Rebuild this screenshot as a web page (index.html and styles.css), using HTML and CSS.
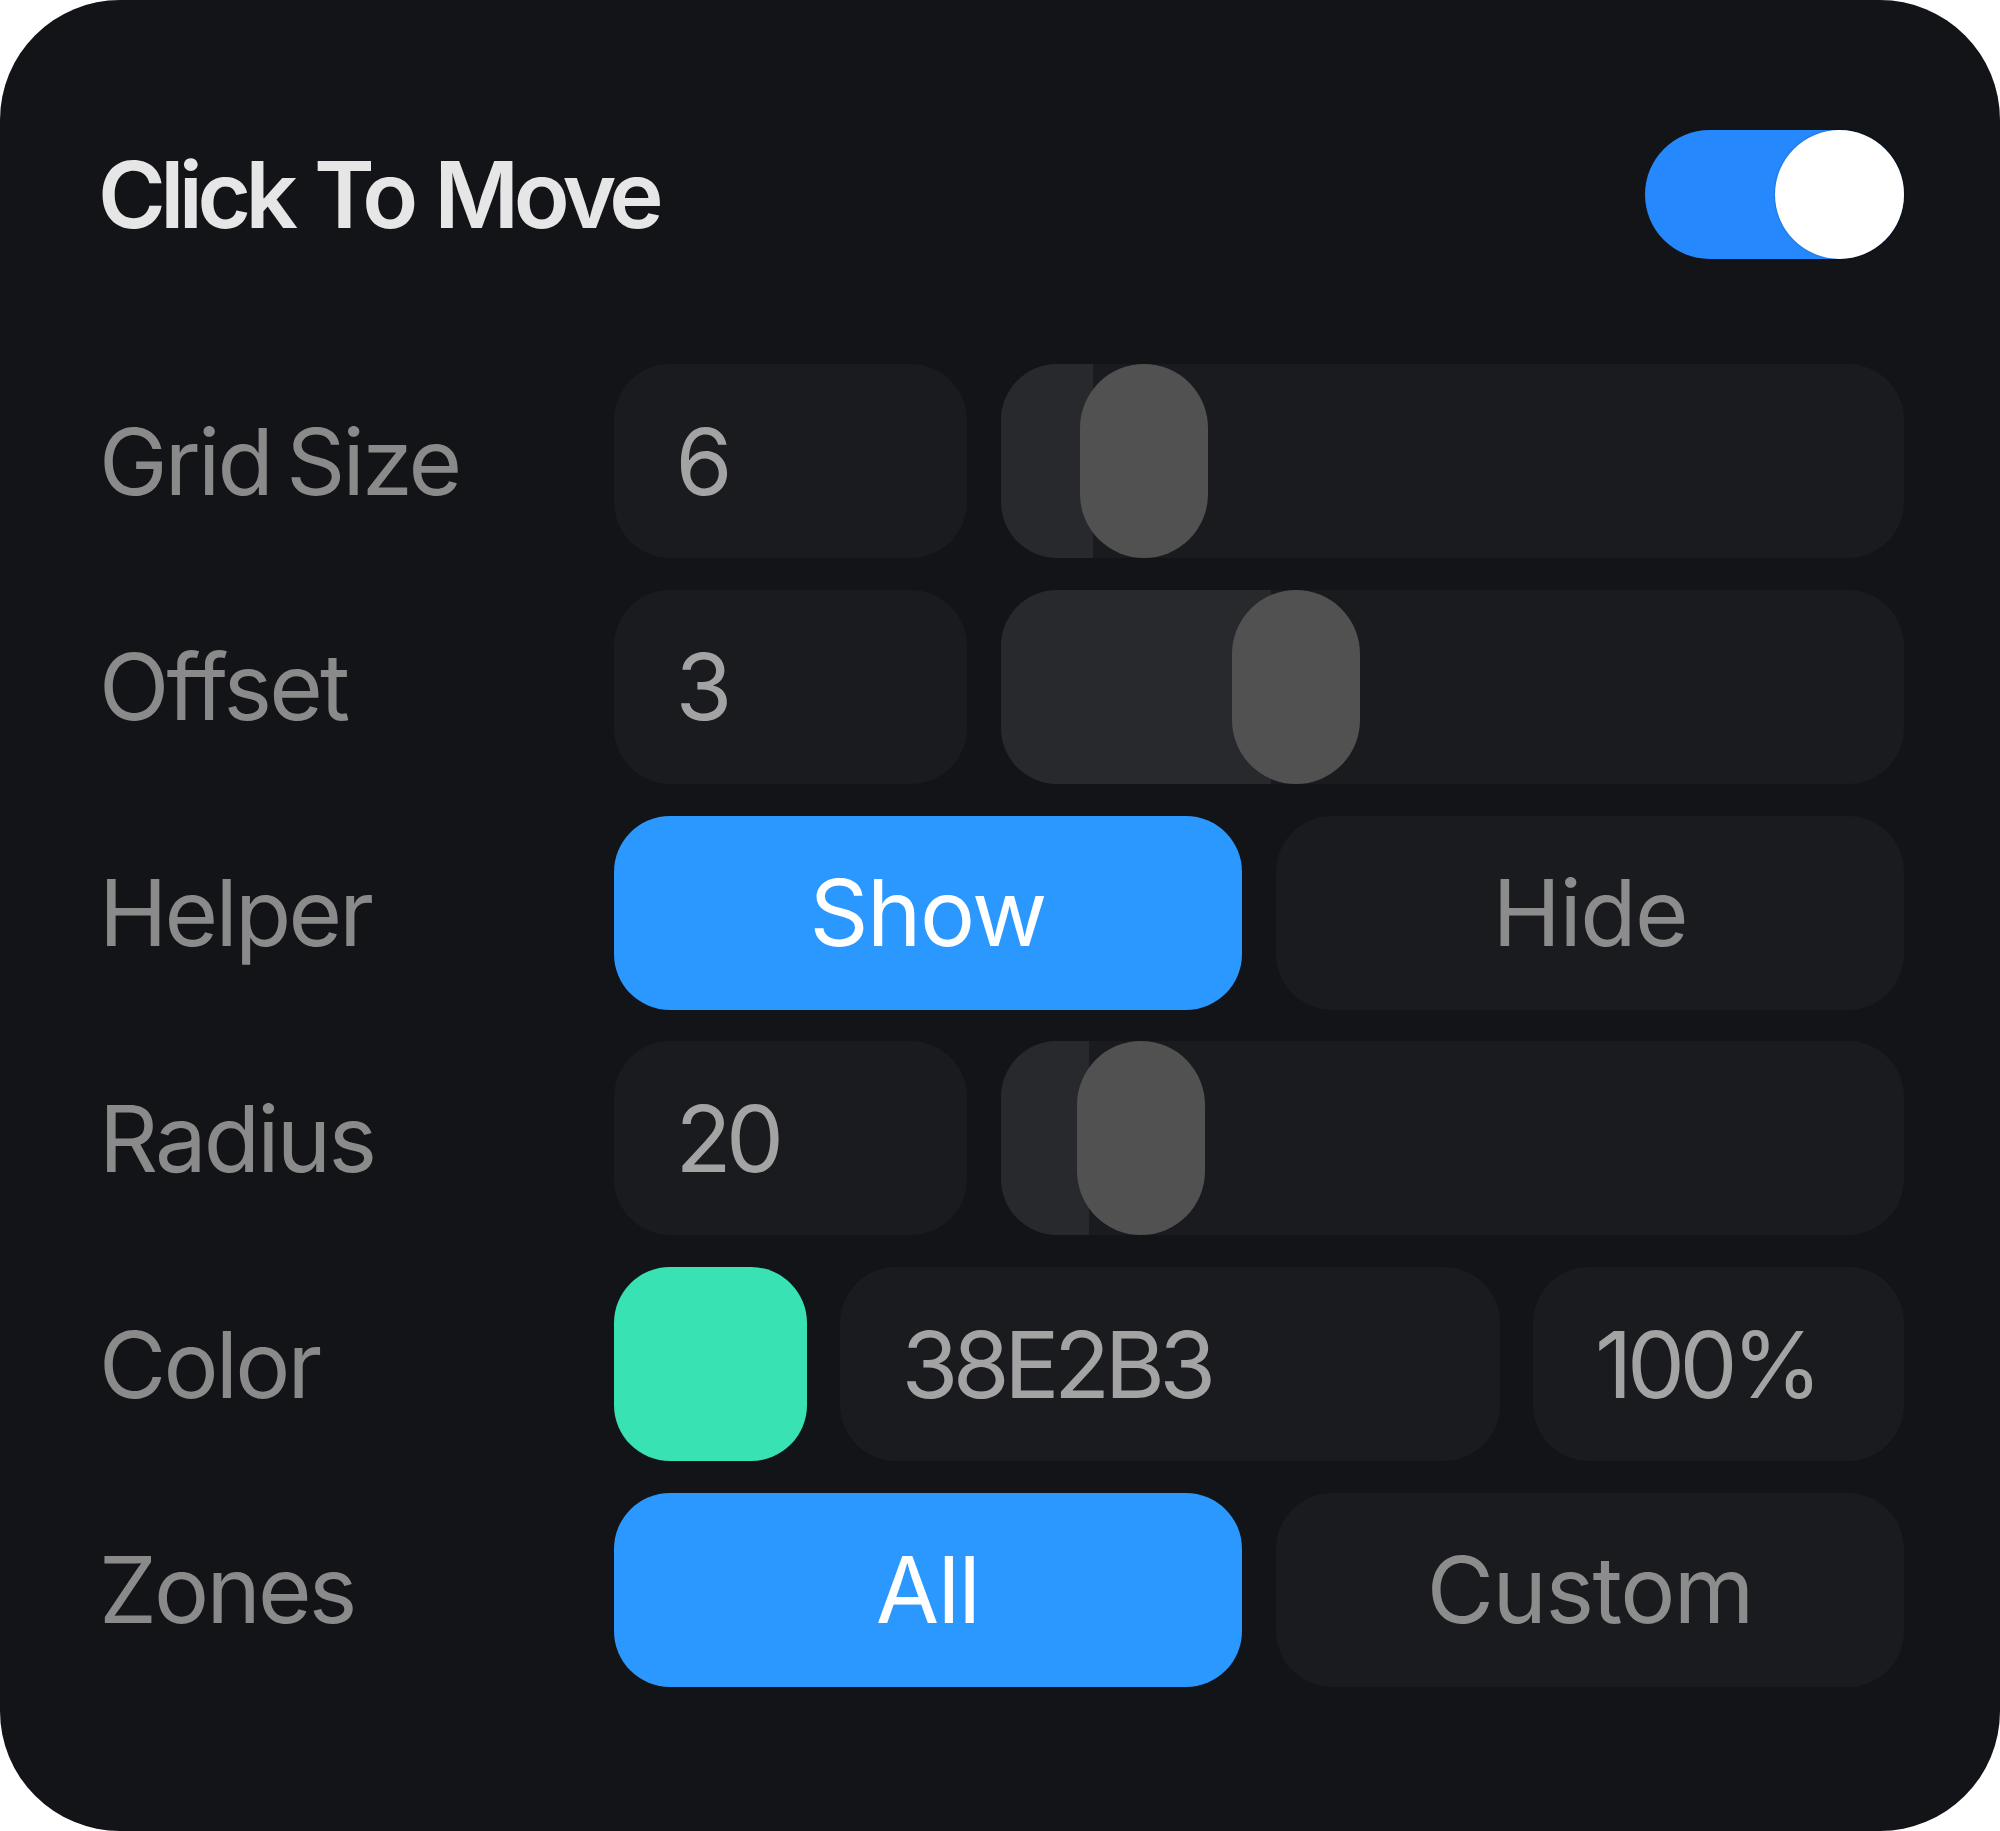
FILE: index.html
```html
<!DOCTYPE html>
<html lang="en">
<head>
<meta charset="utf-8">
<title>Click To Move</title>
<link rel="stylesheet" href="styles.css">
</head>
<body>
<div class="panel">
  <div class="header">
    <div class="title">Click To Move</div>
    <div class="toggle"><div class="knob"></div></div>
  </div>
  <div class="rows">
    <div class="row">
      <div class="label">Grid Size</div>
      <div class="ctrl ctrl-slider">
        <div class="box value">6</div>
        <div class="track">
          <div class="fill" style="width:10.2%"></div>
          <div class="thumb" style="left:calc((100% - 128px) * 0.102)"></div>
        </div>
      </div>
    </div>
    <div class="row">
      <div class="label">Offset</div>
      <div class="ctrl ctrl-slider">
        <div class="box value">3</div>
        <div class="track">
          <div class="fill" style="width:29.85%"></div>
          <div class="thumb" style="left:calc((100% - 128px) * 0.2985)"></div>
        </div>
      </div>
    </div>
    <div class="row">
      <div class="label">Helper</div>
      <div class="ctrl ctrl-seg">
        <div class="seg active">Show</div>
        <div class="seg">Hide</div>
      </div>
    </div>
    <div class="row">
      <div class="label">Radius</div>
      <div class="ctrl ctrl-slider">
        <div class="box value">20</div>
        <div class="track">
          <div class="fill" style="width:9.8%"></div>
          <div class="thumb" style="left:calc((100% - 128px) * 0.098)"></div>
        </div>
      </div>
    </div>
    <div class="row">
      <div class="label">Color</div>
      <div class="ctrl ctrl-color">
        <div class="swatch"></div>
        <div class="box value">38E2B3</div>
        <div class="box value">100%</div>
      </div>
    </div>
    <div class="row">
      <div class="label">Zones</div>
      <div class="ctrl ctrl-seg">
        <div class="seg active">All</div>
        <div class="seg">Custom</div>
      </div>
    </div>
  </div>
</div>
</body>
</html>
```
FILE: styles.css
```css
* { box-sizing: border-box; }
html, body { margin: 0; padding: 0; background: #ffffff; }
body { font-family: "Inter", "Noto Sans", "Liberation Sans", sans-serif; }

.panel {
  width: 2000px;
  height: 1831px;
  background: #131418;
  border-radius: 120px;
  padding: 130px 96px 0 96px;
}

.header {
  display: flex;
  align-items: center;
  justify-content: space-between;
  height: 129px;
  margin-bottom: 105px;
}

.title {
  font-size: 92px;
  font-weight: 600;
  color: #e6e6e6;
  letter-spacing: -5.5px;
  word-spacing: 4px;
  padding-left: 2px;
}

.toggle {
  width: 259px;
  height: 129px;
  border-radius: 65px;
  background: #2588fc;
  position: relative;
}
.knob {
  position: absolute;
  right: 0;
  top: 0;
  width: 129px;
  height: 129px;
  border-radius: 50%;
  background: #ffffff;
  box-shadow: 0 0 2px rgba(0, 0, 0, 0.35);
}

.rows {
  display: flex;
  flex-direction: column;
  gap: 31.8px;
}

.row {
  display: grid;
  grid-template-columns: 517.5px 1fr;
  height: 194px;
  align-items: center;
}

.label {
  font-size: 92px;
  color: #8a8a8a;
  letter-spacing: -2.8px;
  word-spacing: -8px;
  padding-left: 3px;
}

.ctrl { height: 194px; }

.ctrl-slider {
  display: grid;
  grid-template-columns: 353.5px 1fr;
  gap: 34px;
}

.ctrl-seg {
  display: grid;
  grid-template-columns: 1fr 1fr;
  gap: 34px;
}

.ctrl-color {
  display: grid;
  grid-template-columns: 193px 1fr 371px;
  gap: 33px;
}

.box {
  background: #1a1b1f;
  border-radius: 56px;
  height: 194px;
  display: flex;
  align-items: center;
}

.value {
  padding-left: 62px;
  font-size: 92px;
  color: #a3a3a3;
  letter-spacing: -5.5px;
}

.track {
  position: relative;
  background: #1a1b1f;
  border-radius: 56px;
  height: 194px;
  overflow: hidden;
}
.fill {
  position: absolute;
  left: 0;
  top: 0;
  bottom: 0;
  background: #28292d;
}
.thumb {
  position: absolute;
  top: 0;
  width: 128px;
  height: 194px;
  border-radius: 64px;
  background: #515151;
}

.seg {
  background: #1a1b1f;
  border-radius: 56px;
  height: 194px;
  display: flex;
  align-items: center;
  justify-content: center;
  font-size: 92px;
  color: #8c8c8c;
  letter-spacing: -1.5px;
}
.seg.active {
  background: #2a98ff;
  color: #ffffff;
}

.swatch {
  background: #38e2b3;
  border-radius: 56px;
  height: 194px;
}
```
